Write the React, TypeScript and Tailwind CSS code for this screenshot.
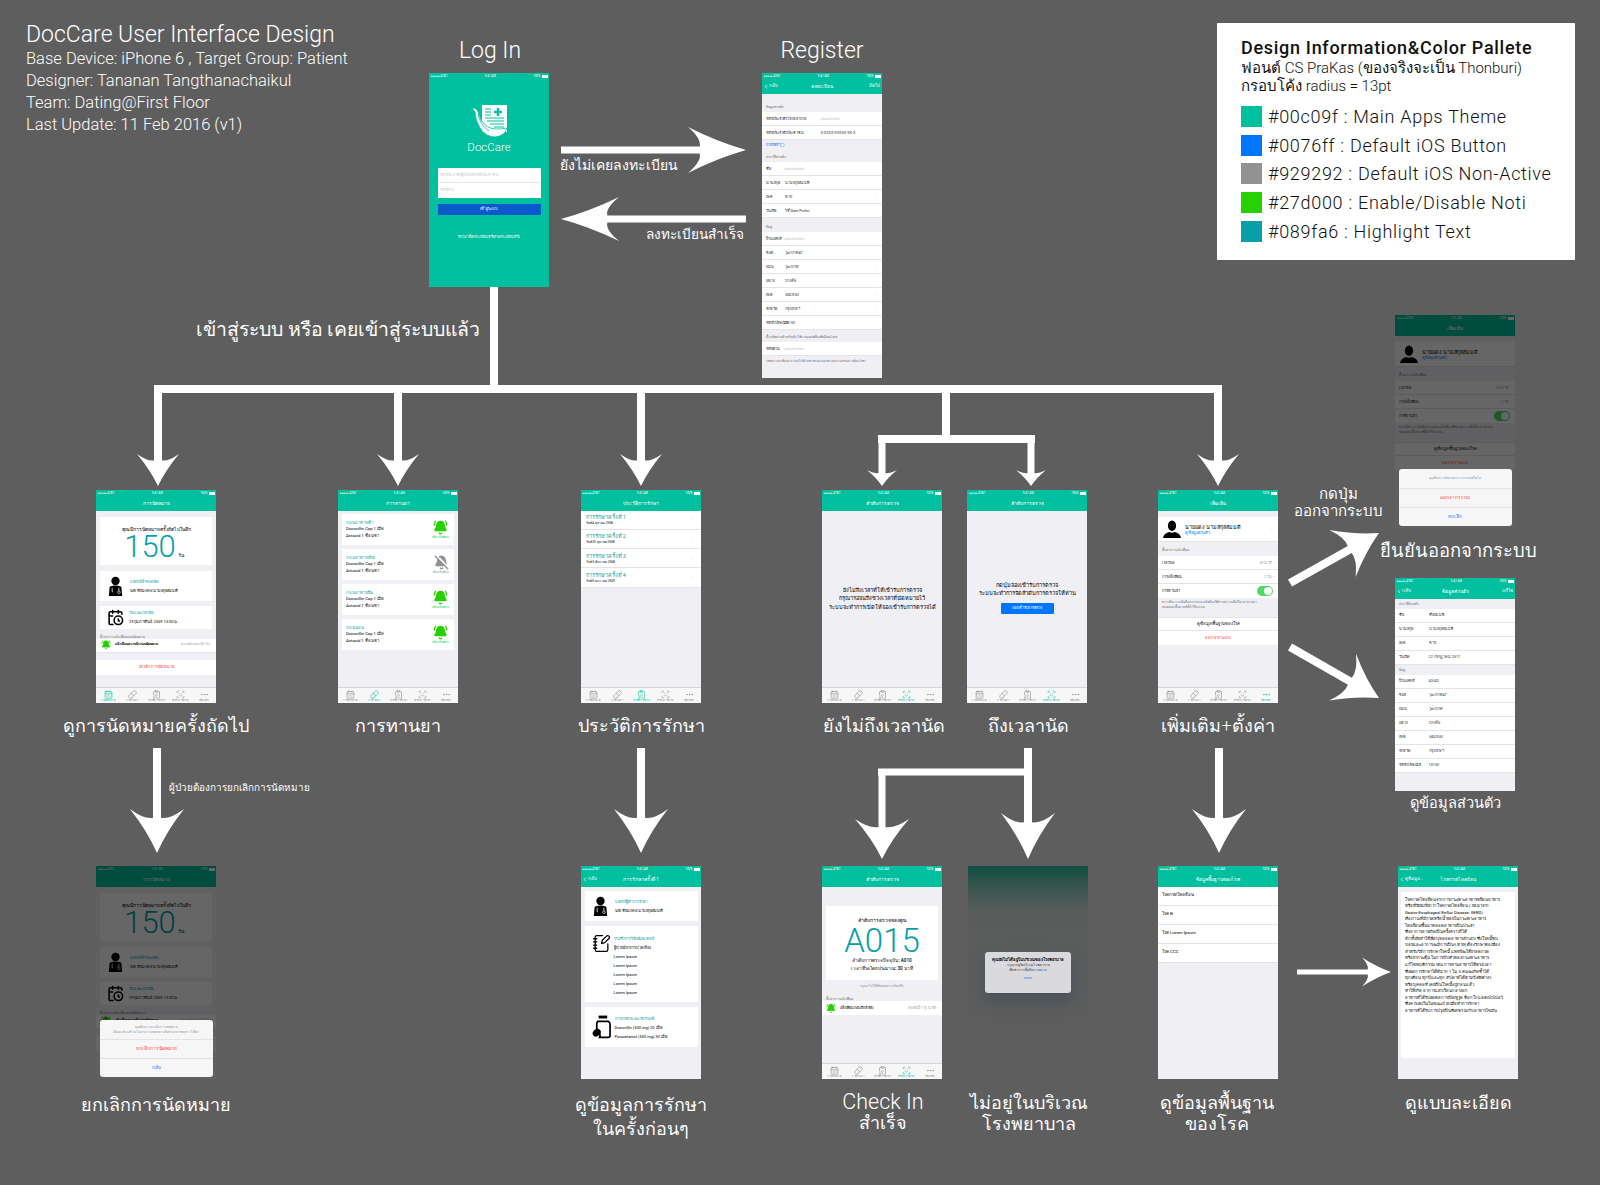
import type { ReactNode } from 'react';
import { BellOff, BellRing, CalendarClock, CalendarDays, ChevronLeft, ChevronRight, ClipboardPen, Ellipsis, NotebookPen, Pill, ScanFace } from 'lucide-react';

// swept arrow head, the same shape is used all over the flow chart
const arrow = (x1: number, y1: number, x2: number, y2: number, hl: number, hw: number, t: number) => {
  const L = Math.hypot(x2 - x1, y2 - y1);
  const ux = (x2 - x1) / L;
  const uy = (y2 - y1) / L;
  const p = (a: number, b: number) => `${(x1 + ux * a - uy * b).toFixed(1)} ${(y1 + uy * a + ux * b).toFixed(1)}`;
  const j = L - hl * 0.8;
  return [
    `M${p(0, t / 2)}`,
    `L${p(j, t / 2)}`,
    `Q${p(L - hl * 0.76, hw * 0.24)} ${p(L - hl, hw / 2)}`,
    `Q${p(L - hl * 0.5, hw * 0.18)} ${p(L, 0)}`,
    `Q${p(L - hl * 0.5, -hw * 0.18)} ${p(L - hl, -hw / 2)}`,
    `Q${p(L - hl * 0.76, -hw * 0.24)} ${p(j, -t / 2)}`,
    `L${p(0, -t / 2)}Z`,
  ].join(' ');
};

const ARROWS = [
  arrow(561, 150, 746, 150, 58, 46, 7),
  arrow(746, 219, 561, 219, 58, 44, 7),
  arrow(158, 389, 158, 486, 32, 42, 8),
  arrow(398, 389, 398, 486, 32, 42, 8),
  arrow(641, 389, 641, 486, 32, 42, 8),
  arrow(1218, 389, 1218, 486, 32, 42, 8),
  arrow(882, 439, 882, 486, 16, 30, 7),
  arrow(1031, 439, 1031, 486, 16, 30, 7),
  arrow(157, 748, 157, 853, 44, 54, 8),
  arrow(641, 748, 641, 853, 44, 54, 8),
  arrow(1219, 748, 1219, 853, 44, 54, 8),
  arrow(1028, 748, 1028, 859, 46, 54, 8),
  arrow(882, 772, 882, 859, 40, 54, 7),
  arrow(1290, 583, 1379, 533, 42, 54, 8),
  arrow(1290, 647, 1379, 698, 42, 54, 8),
  arrow(1297, 972, 1391, 972, 29, 29, 5),
];

function FlowLines() {
  return (
    <svg className="absolute left-0 top-0 w-[1600px] h-[1185px]" viewBox="0 0 1600 1185" fill="none">
      <path d="M494 287V389M154 389H1222M946 389V439M878 439H1035" stroke="#fff" strokeWidth="8" />
      <path d="M1028 748V772H878" stroke="#fff" strokeWidth="7" />
      {ARROWS.map((d, i) => (
        <path key={i} d={d} fill="#fff" />
      ))}
    </svg>
  );
}

function StatusBar() {
  return (
    <div className="h-[6.5px] shrink-0 flex items-center justify-between px-[1.5px] text-[3px] leading-none text-white bg-[#00c09f]">
      <span>●●●●● AT&amp;T</span>
      <span>9:41 AM</span>
      <span className="flex items-center gap-[1px]">
        100% <span className="w-[6px] h-[2.5px] bg-white" />
      </span>
    </div>
  );
}

function Header({ title, left, right }: { title: string; left?: string; right?: string }) {
  return (
    <div className="w-full shrink-0 bg-[#00c09f] text-white">
      <StatusBar />
      <div className="h-[14px] flex items-center justify-between px-[1px] text-[5px] leading-none relative">
        <span className="flex items-center w-[24px] text-[4.6px]">
          {left && <ChevronLeft className="w-[6px] h-[7px]" strokeWidth={3} />}
          {left}
        </span>
        <span>{title}</span>
        <span className="w-[24px] text-right pr-[1px] text-[4.6px]">{right}</span>
      </div>
    </div>
  );
}

const TABS = [
  { label: 'การนัดหมาย', Icon: CalendarDays },
  { label: 'การทานยา', Icon: Pill },
  { label: 'ประวัติการรักษา', Icon: ClipboardPen },
  { label: 'ลำดับการตรวจ', Icon: ScanFace },
  { label: 'เพิ่มเติม', Icon: Ellipsis },
];

function TabBar({ active }: { active: number }) {
  return (
    <div className="mt-auto w-full h-[16px] shrink-0 bg-[#f7f7f7] border-t border-[#d6d6d8] flex">
      {TABS.map(({ label, Icon }, i) => (
        <div key={label} className={`flex-1 flex flex-col items-center pt-[1.5px] ${i === active ? 'text-[#00c09f]' : 'text-[#8b8b8b]'}`}>
          <Icon className="w-[9px] h-[9px]" strokeWidth={1.6} />
          <span className="text-[2.6px] leading-[3px] whitespace-nowrap">{label}</span>
        </div>
      ))}
    </div>
  );
}

function Phone({ className, children }: { className: string; children: ReactNode }) {
  return <div className={`absolute w-[120px] h-[213px] bg-[#efeff4] overflow-hidden flex flex-col text-black font-normal ${className}`}>{children}</div>;
}

function Label({ className, lines }: { className: string; lines: string[] }) {
  return (
    <div className={`absolute text-center text-white font-light whitespace-nowrap ${className}`}>
      {lines.map(l => (
        <div key={l}>{l}</div>
      ))}
    </div>
  );
}

function Doctor({ className }: { className: string }) {
  return (
    <svg className={className} viewBox="0 0 20 24" fill="#000">
      <circle cx="10" cy="6" r="5" />
      <path d="M3 13q7-3 14 0l1 11H2z" />
      <path d="M6 14v5M14 14v4M6 19h1M14 18a1.5 1.5 0 1 0 .1 0" stroke="#fff" strokeWidth=".9" fill="none" />
    </svg>
  );
}

function Person({ className }: { className: string }) {
  return (
    <svg className={className} viewBox="0 0 24 24" fill="#000">
      <ellipse cx="12" cy="7.5" rx="5.5" ry="7" />
      <path d="M0 24q1-6 8-8l4 1 4-1q7 2 8 8z" />
    </svg>
  );
}

function Bottle({ className }: { className: string }) {
  return (
    <svg className={className} viewBox="0 0 20 24" fill="#000">
      <rect x="7" y="0" width="9" height="3" />
      <path d="M6 6h11q2 1 2 3v12q0 2-2 2H8q1-2 0-4l-3-2V9q0-2 1-3z" fill="none" stroke="#000" strokeWidth="1.8" />
      <ellipse cx="5" cy="18" rx="4.6" ry="3.6" transform="rotate(-40 5 18)" />
    </svg>
  );
}

function Logo() {
  return (
    <svg className="w-[35px] h-[32px]" viewBox="0 0 35 32">
      <path d="M10 0h25v27H10z" fill="#fff" />
      <path d="M13 4h6M13 7h6M13 10h6M13 13h19M15 16h17M18 19h14M22 22h10" stroke="#00c09f" strokeWidth="1" />
      <path d="M26 3v8M22 7h8" stroke="#00c09f" strokeWidth="2.4" />
      <path d="M0 3q5-.5 6.500 5L9 15q6 9 15 9 6 0 11-1-2 8-12 9-9 0-15-9Q3 14 3 7z" fill="#fff" stroke="#00c09f" strokeWidth=".8" />
      <path d="M6 9q2 11 11 17" stroke="#00c09f" strokeWidth=".8" fill="none" />
    </svg>
  );
}

function Sub({ children, className = '' }: { children: ReactNode; className?: string }) {
  return <div className={`text-[3.4px] leading-[4px] text-[#6d6d72] px-[3.5px] whitespace-nowrap ${className}`}>{children}</div>;
}

function Row({ label, value, chevron, labelWidth = 'w-[19px]', muted, right }: { label: string; value?: string; chevron?: boolean; labelWidth?: string; muted?: boolean; right?: string }) {
  return (
    <div className="h-[14px] shrink-0 bg-white border-b border-[#e4e4e7] flex items-center px-[3.5px] text-[3.8px] whitespace-nowrap text-[#222]">
      <span className={`${labelWidth} shrink-0`}>{label}</span>
      <span className={muted ? 'text-[#c4c4c8]' : 'text-[#333]'}>{value}</span>
      {chevron && <ChevronRight className="ml-auto w-[4px] h-[5px] text-[#d2d2d6]" />}
      {right && <span className="ml-auto text-[#9a9a9e]">{right}</span>}
    </div>
  );
}

function AppointmentBody() {
  return (
    <>
      <Header title="การนัดหมาย" />
      <div className="mx-[4px] mt-[6px] h-[48px] bg-white flex flex-col items-center pt-[9px]">
        <div className="text-[5px] leading-[6px] whitespace-nowrap">คุณมีการนัดหมายครั้งถัดไปในอีก</div>
        <div className="mr-[12px] text-[31px] leading-[30px] font-light text-[#089fa6] relative">
          150
          <span className="absolute left-[54px] bottom-[4px] text-[5px] leading-[6px] text-black">วัน</span>
        </div>
      </div>
      <div className="mx-[4px] mt-[6px] h-[30px] bg-white flex items-center pl-[7px] gap-[6px]">
        <Doctor className="w-[17px] h-[20px]" />
        <div className="text-[4px] leading-[9px] whitespace-nowrap">
          <div className="text-[#089fa6]">แพทย์เจ้าของนัด</div>
          <div>นพ.ชัยมงคล นามสกุลสมมติ</div>
        </div>
      </div>
      <div className="mx-[4px] mt-[5px] h-[23px] bg-white flex items-center pl-[7px] gap-[5px]">
        <CalendarClock className="w-[17px] h-[17px]" strokeWidth={2.2} />
        <div className="text-[4px] leading-[9px] whitespace-nowrap">
          <div className="text-[#089fa6]">วันและเวลานัด</div>
          <div>29 กุมภาพันธ์ 2559 13:00 น.</div>
        </div>
      </div>
      <Sub className="mt-[6px]">ตั้งค่าการแจ้งเตือนก่อนนัดหมาย</Sub>
      <div className="h-[14px] bg-white border-b border-[#e4e4e7] flex items-center px-[5px] gap-[4px] text-[4px] whitespace-nowrap">
        <BellRing className="w-[10px] h-[10px] text-[#27d000]" fill="#27d000" />
        <span className="font-bold text-[3.6px]">แจ้งเตือนล่วงหน้าก่อนนัดหมาย</span>
        <span className="ml-auto text-[#9a9a9e] text-[3.6px]">ล่วงหน้าก่อน 30 วัน ›</span>
      </div>
      <div className="mt-[7px] h-[15px] bg-white flex items-center justify-center text-[4.2px] text-[#ff3b30]">ยกเลิกการนัดหมาย</div>
    </>
  );
}

const MEDS = [
  { when: 'ก่อนอาหารเช้า', on: true },
  { when: 'ก่อนอาหารเที่ยง', on: false },
  { when: 'ก่อนอาหารเย็น', on: true },
  { when: 'ก่อนนอน', on: true },
];

function MoreBody() {
  return (
    <>
      <Header title="เพิ่มเติม" />
      <div className="mt-[6.500px] h-[25px] bg-white flex items-center pl-[5px] pr-[4px] gap-[4px] border-b border-[#e4e4e7]">
        <Person className="w-[18px] h-[18px]" />
        <div className="whitespace-nowrap">
          <div className="text-[5.4px] leading-[7px]">นายแดง นามสกุลสมมติ</div>
          <div className="text-[4px] leading-[4px] text-[#0076ff]">ดูข้อมูลส่วนตัว</div>
        </div>
        <ChevronRight className="ml-auto w-[4px] h-[5px] text-[#c7c7cc]" />
      </div>
      <Sub className="mt-[6px] mb-[4px]">ตั้งค่าการแจ้งเตือน</Sub>
      <Row label="เวลานัด" labelWidth="w-[30px]" right="30 นาที ›" />
      <Row label="การแจ้งเตือน" labelWidth="w-[30px]" right="2 วัน ›" />
      <div className="h-[14px] shrink-0 bg-white flex items-center justify-between px-[3.5px] pr-[5px] text-[3.8px]">
        การทานยา
        <span className="w-[16px] h-[10px] rounded-full bg-[#4cd964] flex justify-end p-[1px]">
          <span className="w-[8px] h-[8px] rounded-full bg-white" />
        </span>
      </div>
      <div className="px-[3.5px] pt-[2px] h-[19px] text-[3px] leading-[5px] text-[#6d6d72]">
        <div className="whitespace-nowrap">หากเปิดการแจ้งเตือน ระบบจะแจ้งเตือนให้ท่านทราบเมื่อถึงเวลาทานยา</div>
        <div className="whitespace-nowrap">ของแต่ละมื้อตามที่ตั้งไว้ในระบบ</div>
      </div>
      <div className="h-[14px] shrink-0 bg-white border-b border-t border-[#e4e4e7] flex items-center justify-center text-[4.2px]">ดูข้อมูลพื้นฐานของโรค</div>
      <div className="h-[14px] shrink-0 bg-white flex items-center justify-center text-[4.2px] text-[#ff3b30]">ออกจากระบบ</div>
    </>
  );
}

function Alert({ message, action, cancel }: { message: string[]; action: string; cancel: string }) {
  return (
    <div className="absolute left-[3.500px] right-[3.500px] bottom-[2px] h-[57px] rounded-[3px] bg-[#f6f6f6] flex flex-col text-center">
      <div className="h-[19px] flex flex-col justify-center text-[3px] leading-[5px] text-[#8e8e93] whitespace-nowrap">
        {message.map(m => (
          <div key={m}>{m}</div>
        ))}
      </div>
      <div className="h-[19px] border-t border-[#e2e2e2] flex items-center justify-center text-[4.8px] text-[#ff3b30]">{action}</div>
      <div className="h-[19px] border-t border-[#e2e2e2] flex items-center justify-center text-[4.8px] text-[#0076ff]">{cancel}</div>
    </div>
  );
}

const DISEASE_TEXT = [
  'โรคกรดไหลย้อนจากการกระเพาะอาหารขย้อนอาหาร',
  'หรือที่นิยมเรียกว่า โรคกรดไหลย้อน ( ย่อมาจาก',
  'Gastro-Esophageal Reflux Disease; GERD)',
  'คือภาวะที่มีกรดหรือน้ำย่อยในกระเพาะอาหาร',
  'ไหลย้อนขึ้นมาหลอดอาหารเป็นประจำ',
  'ซึ่งอาการอาจเกิดเป็นครั้งคราวก็ได้',
  'อีกทั้งยังทำให้เยื่อบุหลอดอาหารอักเสบ ซึ่งโรคนี้พบ',
  'บ่อยและอาการจะมีการเป็นๆ หายๆ ต้องรักษาต่อเนื่อง',
  'สำหรับวิธีการรักษาโรคนี้ แพทย์จะให้ยาลดกรด',
  'หรือยากระตุ้น ในการบีบตัวของกระเพาะอาหาร',
  'แก้ไขพฤติกรรม เช่น การทานอาหารให้ตรงเวลา',
  'ซึ่งผลการรักษาได้ดีมาก 1 ใน 5 คนจะเกิดซ้ำได้',
  'ทุกเดือน ทุกปีและทุก สัปดาห์ได้ตามปัจจัยต่างๆ',
  'หรือบุคคลที่ เคยเป็นโรคนี้อยู่ก่อนแล้ว',
  'ทำให้เกิด อาการแสบร้อนกลางอก',
  'อาหารที่ได้รับผลต่อการเปิดหูรูด ช็อกโกแลตเปปเปอร์',
  'ซึ่งควรงดเว้นในขณะป่วย เมื่อทำการรักษา',
  'อาหารที่ได้รับการปรุงเป็นพิเศษร่วมกับอาหารไขมัน',
];

const REG_ADDR = [
  ['ซอย', 'วุฒากาศ 47', false],
  ['ถนน', 'วุฒากาศ', true],
  ['แขวง', 'บางค้อ', true],
  ['เขต', 'จอมทอง', true],
  ['จังหวัด', 'กรุงเทพฯ', true],
] as const;

export default function App() {
  return (
    <div className="relative w-[1600px] h-[1185px] overflow-hidden bg-[#5e5e5e] font-['Roboto','Noto_Sans',sans-serif] font-light">
      <FlowLines />

      {/* title block */}
      <div className="absolute left-[26px] top-[21px] text-white whitespace-nowrap">
        <div className="text-[23px] leading-[28px]">DocCare User Interface Design</div>
        <div className="text-[16.500px] leading-[22px] -mt-[1px]">
          <div>Base Device: iPhone 6 , Target Group: Patient</div>
          <div>Designer: Tananan Tangthanachaikul</div>
          <div>Team: Dating@First Floor</div>
          <div>Last Update: 11 Feb 2016 (v1)</div>
        </div>
      </div>

      {/* palette */}
      <div className="absolute left-[1217px] top-[23px] w-[358px] h-[237px] bg-white text-[#111] pl-[24px] pt-[15px] whitespace-nowrap font-normal">
        <div className="text-[18px] leading-[20px] font-medium tracking-[0.7px] mb-[1px]">Design Information&amp;Color Pallete</div>
        <div className="text-[15px] leading-[18px] font-light">ฟอนต์ CS PraKas (ของจริงจะเป็น Thonburi)</div>
        <div className="text-[15px] leading-[18px] font-light">กรอบโค้ง radius = 13pt</div>
        <div className="mt-[11px] flex flex-col gap-[7.700px] text-[18px] leading-[21px] font-light tracking-[0.7px]">
          <div className="flex gap-[6px]"><span className="w-[21px] h-[21px] bg-[#00c09f]" />#00c09f : Main Apps Theme</div>
          <div className="flex gap-[6px]"><span className="w-[21px] h-[21px] bg-[#0076ff]" />#0076ff : Default iOS Button</div>
          <div className="flex gap-[6px]"><span className="w-[21px] h-[21px] bg-[#929292]" />#929292 : Default iOS Non-Active</div>
          <div className="flex gap-[6px]"><span className="w-[21px] h-[21px] bg-[#27d000]" />#27d000 : Enable/Disable Noti</div>
          <div className="flex gap-[6px]"><span className="w-[21px] h-[21px] bg-[#089fa6]" />#089fa6 : Highlight Text</div>
        </div>
      </div>

      {/* log in */}
      <Phone className="left-[429px] top-[73px] !h-[214px] !bg-[#00c09f] items-center text-white">
        <div className="w-full"><StatusBar /></div>
        <div className="mt-[25px]"><Logo /></div>
        <div className="mt-[3px] text-[11.5px] leading-[14px] font-light">DocCare</div>
        <div className="mt-[14px] w-[103px] h-[30px] bg-white flex flex-col text-[#c8c8cc] text-[3.8px]">
          <div className="flex-1 flex items-center px-[2px] border-b border-[#e8e8e8]">รหัสประจำตัวผู้ป่วย/เลขบัตรประชาชน</div>
          <div className="flex-1 flex items-center px-[2px]">รหัสผ่าน</div>
        </div>
        <div className="mt-[6px] w-[103px] h-[11px] bg-[#0a5acb] flex items-center justify-center text-[4px]">เข้าสู่ระบบ</div>
        <div className="mt-[19px] text-[3.8px] whitespace-nowrap">ยังไม่ได้ลงทะเบียนหรือ? ลงทะเบียนที่นี่</div>
      </Phone>

      {/* register */}
      <Phone className="left-[762px] top-[73px] !h-[305px] text-[3.8px]">
        <Header title="ลงทะเบียน" left="กลับ" right="ถัดไป" />
        <Sub className="mt-[11px] mb-[3.500px]">ข้อมูลส่วนตัว</Sub>
        <Row label="รหัสประจำตัวโรงพยาบาล" value="placeholder" labelWidth="w-[55px]" muted />
        <Row label="รหัสประจำตัวประชาชน" value="X-XXXX-XXXXX-XX-X" labelWidth="w-[55px]" />
        <div className="h-[10px] flex items-center px-[3.5px] text-[#0076ff]">ถ่ายบัตรฯ ◯</div>
        <Sub className="mt-[5px] mb-[3px]">ประวัติส่วนตัว</Sub>
        <Row label="ชื่อ" value="placeholder" muted />
        <Row label="นามสกุล" value="นามสกุลสมมติ" />
        <Row label="เพศ" value="ชาย" chevron />
        <Row label="วันเกิด" value="ใช้ Date Picker" />
        <Sub className="mt-[6.500px] mb-[3.500px]">ที่อยู่</Sub>
        <Row label="บ้านเลขที่" value="placeholder" muted />
        {REG_ADDR.map(([l, v, c]) => (
          <Row key={l} label={l} value={v} chevron={c} />
        ))}
        <Row label="รหัสไปรษณีย์" value="10150" />
        <Sub className="mt-[5px] mb-[3px]">ตั้งรหัสผ่านสำหรับเข้าใช้งานแอปพลิเคชัน DocCare</Sub>
        <Row label="รหัสผ่าน" value="placeholder" muted />
        <Sub className="mt-[3px] !text-[3px]">รหัสผ่านจะต้องประกอบไปด้วยตัวอักษรและตัวเลข รวมกันอย่างน้อย 6 ตัว</Sub>
      </Phone>

      {/* appointment */}
      <Phone className="left-[96px] top-[490px]">
        <AppointmentBody />
        <TabBar active={0} />
      </Phone>

      {/* medicine */}
      <Phone className="left-[338px] top-[490px]">
        <Header title="การทานยา" />
        <div className="mx-[4px] mt-[3.500px] flex flex-col gap-[4px]">
          {MEDS.map(m => (
            <div key={m.when} className="h-[31px] bg-white flex items-center pl-[4px] pr-[5px] text-[4.2px] leading-[6.500px] whitespace-nowrap">
              <div>
                <div className="text-[#089fa6]">{m.when}</div>
                <div>Doxocillin Cap 1 เม็ด</div>
                <div>Antacid 1 ช้อนชา</div>
              </div>
              <div className={`ml-auto flex flex-col items-center ${m.on ? 'text-[#27d000]' : 'text-[#929292]'}`}>
                {m.on ? <BellRing className="w-[15px] h-[15px]" fill="#27d000" /> : <BellOff className="w-[15px] h-[15px]" fill="#929292" />}
                <span className="text-[2.8px] leading-[5px]">{m.on ? 'เปิดแจ้งเตือน' : 'ปิดแจ้งเตือน'}</span>
              </div>
            </div>
          ))}
        </div>
        <TabBar active={1} />
      </Phone>

      {/* history */}
      <Phone className="left-[581px] top-[490px]">
        <Header title="ประวัติการรักษา" />
        {['วันที่ 4 ตุลาคม 2558', 'วันที่ 20 ตุลาคม 2558', 'วันที่ 3 ธันวาคม 2558', 'วันที่ 5 มกราคม 2559'].map((d, i) => (
          <div key={d} className="h-[19.300px] bg-white border-b border-[#e4e4e7] flex items-center pl-[4.500px] pr-[7px] whitespace-nowrap">
            <div>
              <div className="text-[5.4px] leading-[7px] text-[#089fa6]">การรักษาครั้งที่ {i + 1}</div>
              <div className="text-[3.2px] leading-[4px]">{d}</div>
            </div>
            <ChevronRight className="ml-auto w-[5px] h-[6px] text-[#d2d2d6]" />
          </div>
        ))}
        <TabBar active={2} />
      </Phone>

      {/* not yet */}
      <Phone className="left-[822px] top-[490px]">
        <Header title="ลำดับการตรวจ" />
        <div className="mt-[75px] text-center text-[5.600px] leading-[8.500px] whitespace-nowrap">
          <div>ยังไม่ถึงเวลาที่ให้เข้ารับการตรวจ</div>
          <div>กรุณารอจนถึงช่วงเวลาที่นัดหมายไว้</div>
          <div>ระบบจะทำการเปิดให้จองเข้ารับการตรวจได้</div>
        </div>
        <TabBar active={3} />
      </Phone>

      {/* on time */}
      <Phone className="left-[967px] top-[490px] items-center">
        <Header title="ลำดับการตรวจ" />
        <div className="mt-[70px] text-center text-[5.700px] leading-[8.500px] whitespace-nowrap">
          <div>กดปุ่มจองเข้ารับการตรวจ</div>
          <div>ระบบจะทำการจัดลำดับการตรวจให้ท่าน</div>
        </div>
        <div className="mt-[5px] w-[53px] h-[11px] rounded-[1px] bg-[#0076ff] text-white text-[3.8px] flex items-center justify-center">จองเข้ารับการตรวจ</div>
        <TabBar active={3} />
      </Phone>

      {/* more */}
      <Phone className="left-[1158px] top-[490px]">
        <MoreBody />
        <TabBar active={4} />
      </Phone>

      {/* confirm log out */}
      <Phone className="left-[1395px] top-[315px]">
        <MoreBody />
        <div className="absolute inset-0 bg-black/60" />
        <Alert message={['คุณต้องการที่จะออกจากระบบหรือไม่']} action="ออกจากระบบ" cancel="ยกเลิก" />
      </Phone>

      {/* personal info */}
      <Phone className="left-[1395px] top-[578px]">
        <Header title="ข้อมูลส่วนตัว" left="กลับ" right="แก้ไข" />
        <Sub className="py-[3px]">ประวัติส่วนตัว</Sub>
        <Row label="ชื่อ" value="ชื่อสมมติ" labelWidth="w-[30px]" />
        <Row label="นามสกุล" value="นามสกุลสมมติ" labelWidth="w-[30px]" />
        <Row label="เพศ" value="ชาย" labelWidth="w-[30px]" />
        <Row label="วันเกิด" value="22 กรกฎาคม 2517" labelWidth="w-[30px]" />
        <Sub className="py-[3px]">ที่อยู่</Sub>
        <Row label="บ้านเลขที่" value="43/40" labelWidth="w-[30px]" />
        <Row label="ซอย" value="วุฒากาศ 47" labelWidth="w-[30px]" />
        <Row label="ถนน" value="วุฒากาศ" labelWidth="w-[30px]" />
        <Row label="แขวง" value="บางค้อ" labelWidth="w-[30px]" />
        <Row label="เขต" value="จอมทอง" labelWidth="w-[30px]" />
        <Row label="จังหวัด" value="กรุงเทพฯ" labelWidth="w-[30px]" />
        <Row label="รหัสไปรษณีย์" value="10150" labelWidth="w-[30px]" />
      </Phone>

      {/* cancel appointment */}
      <Phone className="left-[96px] top-[866px]">
        <AppointmentBody />
        <div className="absolute inset-0 bg-black/60" />
        <Alert message={['คุณต้องการยกเลิกการนัดหมาย', 'เมื่อยกเลิกแล้ว จะไม่สามารถนัดหมายในช่วงเวลาดังกล่าวได้อีก']} action="ยกเลิกการนัดหมาย" cancel="กลับ" />
      </Phone>

      {/* treatment detail */}
      <Phone className="left-[581px] top-[866px]">
        <Header title="การรักษาครั้งที่ 1" left="กลับ" />
        <div className="mx-[3.500px] mt-[4.500px] h-[30px] bg-white flex items-center pl-[7px] gap-[6px] text-[4px] leading-[9px] whitespace-nowrap">
          <Doctor className="w-[17px] h-[20px]" />
          <div>
            <div className="text-[#089fa6]">แพทย์ผู้ทำการรักษา</div>
            <div>นพ.ชัยมงคล นามสกุลสมมติ</div>
          </div>
        </div>
        <div className="mx-[3.500px] mt-[5px] h-[76px] bg-white flex pl-[7px] pt-[8px] gap-[3px] text-[4px] leading-[9px] whitespace-nowrap">
          <NotebookPen className="w-[19px] h-[19px]" strokeWidth={1.6} />
          <div>
            <div className="text-[#089fa6]">บันทึกการวินิจฉัยแพทย์</div>
            <div>ผู้ป่วยมีอาการปวดท้อง</div>
            <div>Lorem Ipsum</div>
            <div>Lorem Ipsum</div>
            <div>Lorem Ipsum</div>
            <div>Lorem Ipsum</div>
            <div>Lorem Ipsum</div>
          </div>
        </div>
        <div className="mx-[3.500px] mt-[5px] h-[40px] bg-white flex items-center pl-[7px] gap-[4px] text-[4px] leading-[9px] whitespace-nowrap">
          <Bottle className="w-[19px] h-[24px]" />
          <div>
            <div className="text-[#089fa6]">การจ่ายยาและเวชภัณฑ์</div>
            <div>Doxocillin (500 mg) 20 เม็ด</div>
            <div>Paracetamol (500 mg) 30 เม็ด</div>
          </div>
        </div>
      </Phone>

      {/* check in ok */}
      <Phone className="left-[822px] top-[866px]">
        <Header title="ลำดับการตรวจ" />
        <div className="mx-[4px] mt-[19.500px] h-[74px] bg-white flex flex-col items-center pt-[10.500px] whitespace-nowrap">
          <div className="text-[5px] leading-[6px]">ลำดับการตรวจของคุณ</div>
          <div className="mt-[1px] text-[33px] leading-[33px] font-light text-[#089fa6]">A015</div>
          <div className="text-[4.6px] leading-[8.500px] text-center font-medium">
            <div>ลำดับการตรวจปัจจุบัน: A010</div>
            <div>เวลาที่รอโดยประมาณ: 30 นาที</div>
          </div>
        </div>
        <div className="mt-[3px] text-center text-[3.6px] leading-[6px] text-[#8e8e93]">กรุณาไปให้ทันก่อนการเรียกคิว</div>
        <Sub className="mt-[8px]">ตั้งค่าการแจ้งเตือน</Sub>
        <div className="h-[14px] bg-white flex items-center px-[4px] gap-[4px] text-[3.8px] whitespace-nowrap">
          <BellRing className="w-[10px] h-[11px] text-[#27d000]" fill="#27d000" />
          แจ้งเตือนก่อนถึงลำดับ
          <span className="ml-auto text-[#9a9a9e]">ล่วงหน้า 10 นาที ›</span>
        </div>
        <TabBar active={3} />
      </Phone>

      {/* not in hospital */}
      <div className="absolute left-[968px] top-[866px] w-[120px] h-[213px] bg-gradient-to-b from-[#0a4f42] via-[#5a5c5c] via-[22%] to-[#5e5e5e]">
        <div className="absolute left-[17px] top-[86px] w-[86px] h-[41px] rounded-[3px] bg-[#d9d9de] text-center shadow-[0_8px_16px_rgba(40,60,90,0.35)] whitespace-nowrap">
          <div className="pt-[5px] text-[4.2px] leading-[6px] font-bold">คุณยังไม่ได้อยู่ในบริเวณของโรงพยาบาล</div>
          <div className="text-[3px] leading-[5px] text-[#333]">
            <div>กรุณาอยู่ในบริเวณโรงพยาบาล</div>
            <div>เพื่อทำการเช็คอินการตรวจ</div>
          </div>
          <div className="mt-[3px] text-[3.6px] text-[#0076ff]">ตกลง</div>
        </div>
      </div>

      {/* disease list */}
      <Phone className="left-[1158px] top-[866px]">
        <Header title="ข้อมูลพื้นฐานของโรค" />
        {['โรคกรดไหลย้อน', 'โรค B', 'โรค Lorem Ipsum', 'โรค CCC'].map(d => (
          <div key={d} className="h-[19px] bg-white border-b border-[#e4e4e7] flex items-center pl-[4px] pr-[6px] text-[4.4px]">
            {d}
            <ChevronRight className="ml-auto w-[4px] h-[5px] text-[#d2d2d6]" />
          </div>
        ))}
      </Phone>

      {/* disease detail */}
      <Phone className="left-[1398px] top-[866px]">
        <Header title="โรคกรดไหลย้อน" left="ดูข้อมูล.." />
        <div className="mx-[3px] mt-[5px] h-[166px] bg-white pl-[4px] pt-[5px] text-[4.200px] leading-[6.550px] whitespace-nowrap">
          {DISEASE_TEXT.map(l => (
            <div key={l}>{l}</div>
          ))}
        </div>
      </Phone>

      {/* flow labels */}
      <Label className="left-[430px] top-[36px] w-[120px] text-[23px] leading-[30px]" lines={['Log In']} />
      <Label className="left-[762px] top-[36px] w-[120px] text-[23px] leading-[30px]" lines={['Register']} />
      <Label className="left-[196px] top-[316px] text-[19.400px] leading-[28px]" lines={['เข้าสู่ระบบ หรือ เคยเข้าสู่ระบบแล้ว']} />
      <Label className="left-[560px] top-[155px] text-[14px] leading-[20px]" lines={['ยังไม่เคยลงทะเบียน']} />
      <Label className="left-[646px] top-[224px] text-[13.600px] leading-[20px]" lines={['ลงทะเบียนสำเร็จ']} />
      <Label className="left-[169px] top-[780px] text-[9.900px] leading-[16px]" lines={['ผู้ป่วยต้องการยกเลิกการนัดหมาย']} />

      <Label className="left-[36px] top-[712px] w-[240px] text-[18px] leading-[28px]" lines={['ดูการนัดหมายครั้งถัดไป']} />
      <Label className="left-[278px] top-[712px] w-[240px] text-[18px] leading-[28px]" lines={['การทานยา']} />
      <Label className="left-[521px] top-[712px] w-[240px] text-[18px] leading-[28px]" lines={['ประวัติการรักษา']} />
      <Label className="left-[784px] top-[712px] w-[200px] text-[18px] leading-[28px]" lines={['ยังไม่ถึงเวลานัด']} />
      <Label className="left-[948px] top-[712px] w-[160px] text-[18px] leading-[28px]" lines={['ถึงเวลานัด']} />
      <Label className="left-[1118px] top-[712px] w-[200px] text-[18px] leading-[28px]" lines={['เพิ่มเติม+ตั้งค่า']} />
      <Label className="left-[1358px] top-[537px] w-[200px] text-[18.400px] leading-[28px]" lines={['ยืนยันออกจากระบบ']} />
      <Label className="left-[1355px] top-[790px] w-[200px] text-[14.600px] leading-[26px]" lines={['ดูข้อมูลส่วนตัว']} />
      <Label className="left-[1258px] top-[486px] w-[160px] text-[15px] leading-[17px]" lines={['กดปุ่ม', 'ออกจากระบบ']} />

      <Label className="left-[36px] top-[1091px] w-[240px] text-[18px] leading-[28px]" lines={['ยกเลิกการนัดหมาย']} />
      <Label className="left-[521px] top-[1093px] w-[240px] text-[18px] leading-[24px]" lines={['ดูข้อมูลการรักษา', 'ในครั้งก่อนๆ']} />
      <Label className="left-[803px] top-[1089px] w-[160px] text-[21.500px] leading-[26px]" lines={['Check In']} />
      <Label className="left-[803px] top-[1113px] w-[160px] text-[18px] leading-[20px]" lines={['สำเร็จ']} />
      <Label className="left-[949px] top-[1092px] w-[160px] text-[18px] leading-[21px]" lines={['ไม่อยู่ในบริเวณ', 'โรงพยาบาล']} />
      <Label className="left-[1137px] top-[1092px] w-[160px] text-[18px] leading-[21px]" lines={['ดูข้อมูลพื้นฐาน', 'ของโรค']} />
      <Label className="left-[1378px] top-[1089px] w-[160px] text-[18px] leading-[28px]" lines={['ดูแบบละเอียด']} />
    </div>
  );
}
